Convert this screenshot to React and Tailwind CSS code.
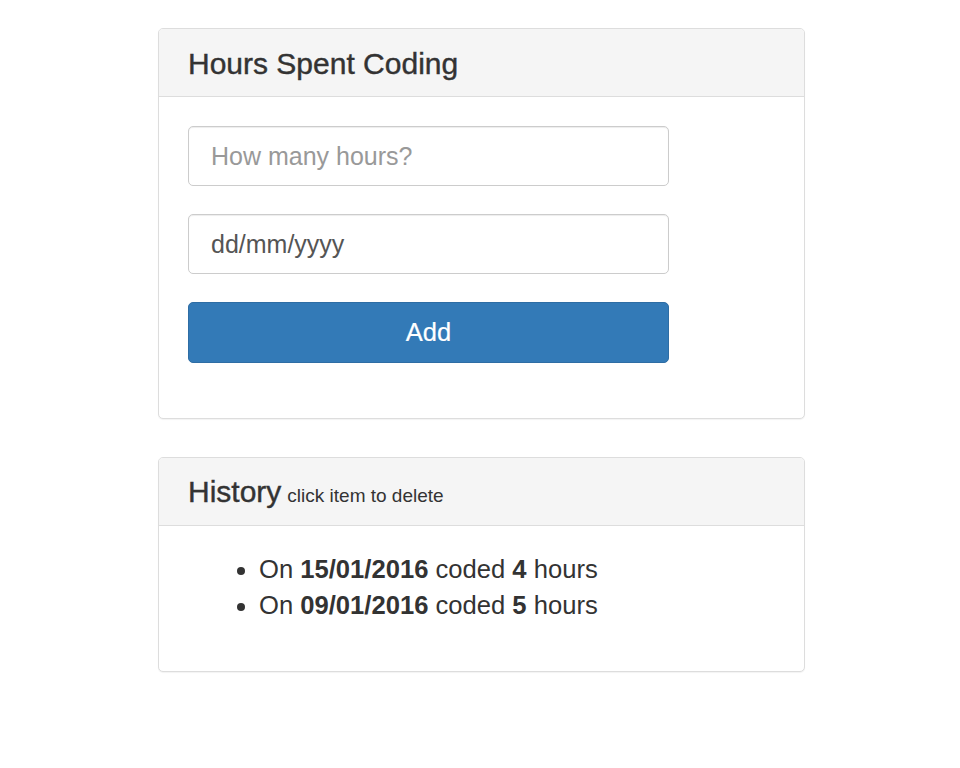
export default function App() {
  const font = { fontFamily: '"Liberation Sans", Arial, sans-serif' };
  return (
    <div className="min-h-[768px] bg-white pt-[28px] text-[#333]" style={font}>
      <div className="ml-[158px] w-[647px]">
        <div className="rounded-[5px] border border-[#ddd] bg-white shadow-[0_1px_1px_rgba(0,0,0,0.05)]">
          <div className="flex h-[68px] items-center rounded-t-[4px] border-b border-[#ddd] bg-[#f5f5f5] px-[29px] pt-[2px]">
            <h3 className="text-[30px] leading-none [-webkit-text-stroke:0.4px_#333]">Hours Spent Coding</h3>
          </div>
          <div className="px-[29px] pb-[55px] pt-[29px]">
            <div className="flex w-[481px] flex-col gap-[28px]">
              <input
                type="text"
                placeholder="How many hours?"
                className="h-[60px] w-full rounded-[5px] border border-[#ccc] px-[22px] text-[25px] text-[#555] shadow-[inset_0_1px_1px_rgba(0,0,0,0.075)] outline-none placeholder:text-[#999]"
              />
              <input
                type="text"
                defaultValue="dd/mm/yyyy"
                className="h-[60px] w-full rounded-[5px] border border-[#ccc] px-[22px] text-[25px] text-[#555] shadow-[inset_0_1px_1px_rgba(0,0,0,0.075)] outline-none"
              />
              <button className="h-[61px] w-full rounded-[5px] border border-[#2e6da4] bg-[#337ab7] text-[25.5px] text-white [-webkit-text-stroke:0.2px_#fff]">
                Add
              </button>
            </div>
          </div>
        </div>

        <div className="mt-[38px] rounded-[5px] border border-[#ddd] bg-white shadow-[0_1px_1px_rgba(0,0,0,0.05)]">
          <div className="flex h-[68px] items-center rounded-t-[4px] border-b border-[#ddd] bg-[#f5f5f5] px-[29px] pt-[1px]">
            <h3 className="flex items-baseline gap-[6px] leading-none">
              <span className="text-[30px] [-webkit-text-stroke:0.4px_#333]">History</span>
              <span className="text-[19px]">click item to delete</span>
            </h3>
          </div>
          <div className="px-[29px] pb-[48px] pt-[25px]">
            <ul className="list-disc pl-[71px] text-[25.6px] leading-[36px]">
              <li>
                On <b>15/01/2016</b> coded <b>4</b> hours
              </li>
              <li>
                On <b>09/01/2016</b> coded <b>5</b> hours
              </li>
            </ul>
          </div>
        </div>
      </div>
    </div>
  );
}
